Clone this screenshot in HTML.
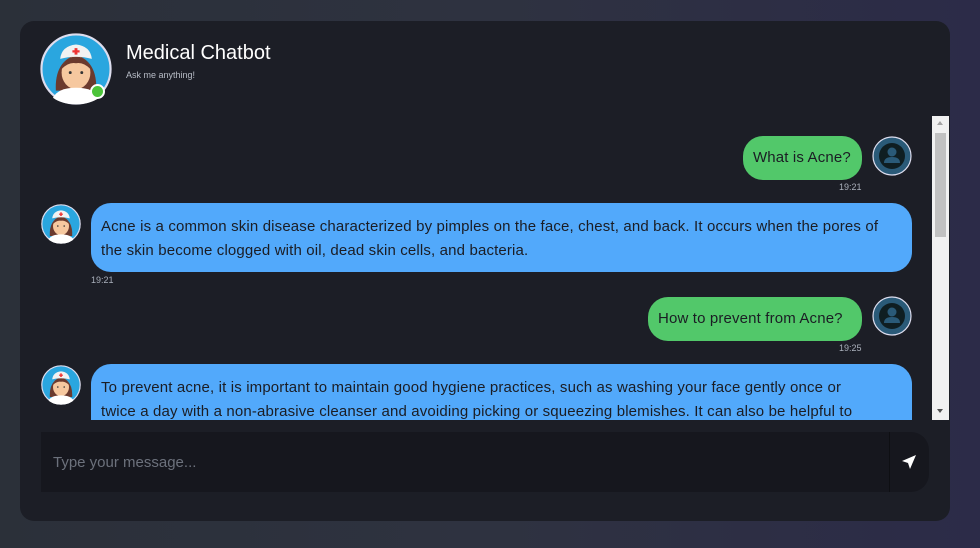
<!DOCTYPE html>
<html><head><style>
*{margin:0;padding:0;box-sizing:border-box}
body{width:980px;height:548px;overflow:hidden;font-family:"Liberation Sans",sans-serif;background:linear-gradient(90deg,#2b3039 0%,#2e3240 50%,#2c2b48 100%);position:relative}
.card{position:absolute;left:20px;top:21px;width:930px;height:500px;background:#1c1e26;border-radius:14px;overflow:hidden}
.title{position:absolute;left:106px;top:21px;color:#fff;font-size:20px}
.sub{position:absolute;left:106px;top:49px;color:#b7bcc6;font-size:9px}
.msgs{position:absolute;left:0;top:95px;width:912px;height:304px;overflow:hidden}
.sb{position:absolute;left:912px;top:95px;width:17px;height:304px;background:#f1f1f1}
.thumb{position:absolute;left:3px;top:17px;width:11px;height:104px;background:#c1c1c1}
.bub{position:absolute;font-size:15px;line-height:24px;color:#1b1d24;border-radius:20px;padding:10px 10px;letter-spacing:0.15px}
.u{background:#52c86a}
.b{background:#52a9fb}
.t{position:absolute;font-size:9px;color:#aab0bb}
.av{position:absolute;width:40px;height:40px;border-radius:50%}
.input{position:absolute;left:21px;top:411px;width:888px;height:60px;background:#16171e;border-radius:0 18px 18px 0}
.input span{position:absolute;left:12px;top:22px;color:#6c717c;font-size:15px}
.sep{position:absolute;left:848px;top:0;width:1px;height:60px;background:#0e0f13}
</style></head><body>
<svg width="0" height="0" style="position:absolute"><defs>
<g id="nurse"><circle cx="50" cy="50" r="48" fill="#2aa6df" stroke="#dde" stroke-width="3"/>
<path d="M22 80 Q20 40 50 30 Q80 40 78 80Z" fill="#6b3a2e"/>
<ellipse cx="50" cy="55" rx="20" ry="23" fill="#f6c89f"/>
<path d="M30 50 Q35 32 50 33 Q65 32 70 50 Q60 40 50 42 Q40 40 30 50Z" fill="#6b3a2e"/>
<path d="M28 36 Q30 18 50 16 Q70 18 72 36 Q50 30 28 36Z" fill="#f2f2f2"/>
<path d="M48 21h4v3h3v3h-3v3h-4v-3h-3v-3h3z" fill="#e33"/>
<path d="M18 90 Q25 76 50 76 Q75 76 82 90 Q70 99 50 99 Q30 99 18 90Z" fill="#fff"/>
<circle cx="42" cy="55" r="2" fill="#333"/><circle cx="58" cy="55" r="2" fill="#333"/>
</g>
<g id="user"><circle cx="20" cy="20" r="19" fill="#2a5a78" stroke="#dde" stroke-width="1.2"/>
<circle cx="20" cy="20" r="13" fill="#0f1e22"/><circle cx="20" cy="16" r="4.5" fill="#2a5a78"/><path d="M12 27 Q12 21 20 21 Q28 21 28 27Z" fill="#2a5a78"/></g>
</defs></svg>
<div class="card">
<svg style="position:absolute;left:20px;top:12px" width="72" height="72" viewBox="0 0 100 100"><use href="#nurse"/></svg>
<div style="position:absolute;left:70px;top:63px;width:15px;height:15px;border-radius:50%;background:#4cc43a;border:2px solid #fff"></div>
<div class="title">Medical Chatbot</div>
<div class="sub">Ask me anything!</div>
<div class="msgs">
<div class="bub u" style="left:723px;top:20px;height:44px;width:119px">What is Acne?</div>
<svg class="av" style="left:852px;top:20px" viewBox="0 0 40 40"><use href="#user"/></svg>
<div class="t" style="left:819px;top:66px">19:21</div>
<svg class="av" style="left:21px;top:88px" viewBox="0 0 100 100"><use href="#nurse"/></svg>
<div class="bub b" style="left:71px;top:87px;width:821px;height:69px;padding:12px 10px">Acne is a common skin disease characterized by pimples on the face, chest, and back. It occurs when the pores of the skin become clogged with oil, dead skin cells, and bacteria.</div>
<div class="t" style="left:71px;top:159px">19:21</div>
<div class="bub u" style="left:628px;top:181px;height:44px;width:214px">How to prevent from Acne?</div>
<svg class="av" style="left:852px;top:180px" viewBox="0 0 40 40"><use href="#user"/></svg>
<div class="t" style="left:819px;top:227px">19:25</div>
<svg class="av" style="left:21px;top:249px" viewBox="0 0 100 100"><use href="#nurse"/></svg>
<div class="bub b" style="left:71px;top:248px;width:821px;height:100px;padding:12px 10px">To prevent acne, it is important to maintain good hygiene practices, such as washing your face gently once or<br>twice a day with a non-abrasive cleanser and avoiding picking or squeezing blemishes. It can also be helpful to</div>
</div>
<div class="sb"><div style="position:absolute;left:5px;top:5px;border:3px solid transparent;border-bottom:4px solid #a3a3a3;border-top:0"></div><div class="thumb"></div><div style="position:absolute;left:5px;top:293px;border:3px solid transparent;border-top:4px solid #505050;border-bottom:0"></div></div>
<div class="input"><span>Type your message...</span><div class="sep"></div>
<svg style="position:absolute;left:860px;top:22px" width="16" height="16" viewBox="0 0 16 16"><path d="M15 1 L1 7 L7 9 L9 15Z" fill="#fff"/></svg></div>
</div>
</body></html>
